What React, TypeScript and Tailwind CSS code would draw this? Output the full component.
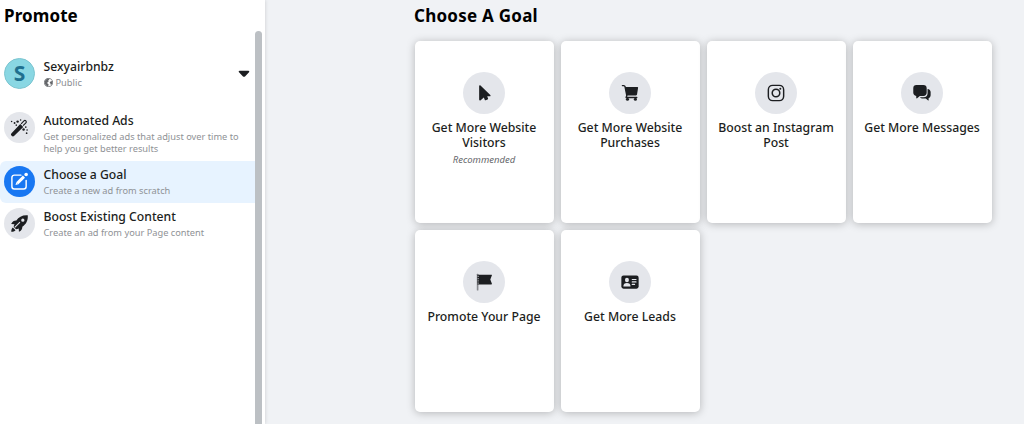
import React from "react";

type IconProps = { className?: string };

const WandIcon = ({ className }: IconProps) => (
  <svg viewBox="0 0 20 20" className={className} fill="currentColor">
    <path d="M1.600 16 10.800 6.400l3.200 3-9.500 9.400c-.9.800-1.900.8-2.700 0-1-.9-1.100-1.900-.2-2.800z" />
    <path
      d="M11.700 6.200 14.700 3.100c.6-.6 1.400-.6 2 0s.6 1.400 0 2l-2.900 3"
      fill="none"
      stroke="currentColor"
      strokeWidth="1.200"
    />
    <circle cx="1.700" cy="3.600" r="0.800" />
    <circle cx="4.800" cy="5.200" r="1" />
    <circle cx="8" cy="3.800" r="1.300" />
    <circle cx="6.600" cy="7.500" r="0.800" />
    <circle cx="11.200" cy="2" r="0.800" />
    <circle cx="16.600" cy="9.500" r="0.900" />
    <circle cx="14.300" cy="12" r="1.300" />
    <circle cx="18" cy="12.600" r="0.800" />
    <circle cx="17.500" cy="16" r="0.900" />
  </svg>
);

const ComposeIcon = ({ className }: IconProps) => (
  <svg viewBox="0 0 20 20" className={className} fill="none" stroke="currentColor">
    <path
      d="M11.500 3.300H4.600A2.600 2.600 0 0 0 2 5.900v9.400a2.600 2.600 0 0 0 2.600 2.600h9.800a2.600 2.600 0 0 0 2.600-2.600V8.800"
      strokeWidth="1.500"
      strokeLinecap="round"
    />
    <path d="M7.700 11.800 14.700 4.900" strokeWidth="3.200" />
    <path d="m5.800 13.800.8-3.100 2.300 2.200z" fill="currentColor" stroke="none" />
    <circle cx="17" cy="2.700" r="1.900" fill="currentColor" stroke="none" />
  </svg>
);

const RocketIcon = ({ className }: IconProps) => (
  <svg viewBox="0 0 20 20" className={className} fill="currentColor">
    <path
      fillRule="evenodd"
      d="M18.700 1.300C13 .9 9.200 3 6.700 6.900 4.300 6.800 2.500 8 1.200 10.500l3.500.2c-.6 1.200-.8 2.100-.8 2.900l2.500 2.500c.9 0 1.800-.3 2.800-.8l.2 3.500c2.500-1.300 3.700-3.100 3.600-5.500 4-2.600 6.100-6.300 5.700-12zM13.500 4.800a1.700 1.700 0 1 1 0 3.400 1.700 1.700 0 0 1 0-3.400z"
    />
    <path d="m5 14 5.500-5.500" stroke="#e4e6eb" strokeWidth="1.100" />
    <path d="M3 14.200c-1.200 1-1.700 2.500-1.700 4.500 2 0 3.500-.5 4.500-1.700z" />
  </svg>
);

const GlobeIcon = ({ className }: IconProps) => (
  <svg viewBox="0 0 16 16" className={className}>
    <circle cx="8" cy="8" r="7.200" fill="#fff" stroke="#65676b" strokeWidth="1.400" />
    <path
      d="M1.300 6.500C2 3.500 4.500 1 8 .9c1.200.4 1.700 1 1 2L7.500 4.600l.8 1.600-2 1.300-.6 2 2.500 1.600-.7 3.700C3.800 14.400.8 11.400 1.300 6.500zM11.500 6l3.400-.500c.5 3.300-.6 6-2.700 7.500l-.5-2.600-1.700-2z"
      fill="#65676b"
    />
  </svg>
);

const CursorIcon = ({ className }: IconProps) => (
  <svg viewBox="0 0 20 20" className={className} fill="currentColor">
    <path d="M4.600 2.300c0-.9.900-1.200 1.500-.6l10.900 10.500c.6.700.2 1.500-.6 1.500h-2.800l.9 2.400c.2.500 0 .9-.5 1.100l-2.100.9c-.5.200-.9 0-1.100-.5l-1-2.500-3.500 2.900c-.7.600-1.700.2-1.700-.7z" />
  </svg>
);

const CartIcon = ({ className }: IconProps) => (
  <svg viewBox="0 0 20 20" className={className} fill="currentColor">
    <path
      d="M1.600 1.800h1.500c.8 0 1.200.4 1.400 1.200l2 9.800-.8 2.200h11.800"
      fill="none"
      stroke="currentColor"
      strokeWidth="1.600"
      strokeLinecap="round"
      strokeLinejoin="round"
    />
    <path d="M4.600 3.400h13.700c.5 0 .8.400.7.900l-1.200 7.500c-.1.600-.5.900-1.100.9H6.300z" />
    <circle cx="7.200" cy="17" r="1.700" />
    <circle cx="16" cy="17" r="1.700" />
  </svg>
);

const InstagramIcon = ({ className }: IconProps) => (
  <svg viewBox="0 0 20 20" className={className} fill="none" stroke="currentColor">
    <rect x="1.500" y="1.500" width="17" height="17" rx="4.800" strokeWidth="1.600" />
    <circle cx="10" cy="10" r="4.200" strokeWidth="1.700" />
    <circle cx="14.800" cy="5.200" r="1.100" fill="currentColor" stroke="none" />
  </svg>
);

const MessagesIcon = ({ className }: IconProps) => (
  <svg viewBox="0 0 20 20" className={className} fill="currentColor">
    <path d="M16.200 5.500c2 .1 3.400 1.500 3.400 3.500v3.200c0 1.700-.8 3-2.300 3.500l.1 2c0 .6-.5.800-.9.400l-2.300-2h-3c-1.600 0-2.900-.5-3.600-1.500h4.200c2.700 0 4.400-1.700 4.400-4.400z" />
    <path d="M3.700 1.100h7.900c2.200 0 3.600 1.300 3.600 3.500v5.200c0 2.100-1.400 3.500-3.600 3.500H7.600l-3 2.500c-.5.400-1 .1-1-.5v-2.100C1.500 12.800.3 11.600.3 9.800V4.600c0-2.200 1.300-3.500 3.400-3.500z" />
  </svg>
);

const FlagIcon = ({ className }: IconProps) => (
  <svg viewBox="0 0 20 20" className={className} fill="currentColor">
    <rect x="2" y="0.800" width="1.800" height="18.600" rx="0.600" fill="#85878c" />
    <path d="M2.600 1.900h15.500c.7 0 .9.400.6.900L17 7.300l1.700 4.500c.3.600 0 1-.6 1H2.600z" />
    <path d="M3.500 3v9" stroke="#a4a6aa" strokeWidth="1.300" strokeDasharray="1.500 1" />
  </svg>
);

const LeadsIcon = ({ className }: IconProps) => (
  <svg viewBox="0 0 20 20" className={className}>
    <rect x="0.400" y="2.800" width="19.200" height="14.600" rx="2.400" fill="currentColor" />
    <g fill="#e4e6eb">
      <ellipse cx="6.600" cy="7.700" rx="2.200" ry="2.500" />
      <path d="M2.600 15c0-2.700 1.500-3.900 4-3.900s4 1.200 4 3.900z" />
      <rect x="11.900" y="6.600" width="5.400" height="1.300" rx="0.600" />
      <rect x="11.900" y="9.300" width="5.400" height="1.300" rx="0.600" />
      <rect x="11.900" y="12" width="3.800" height="1.300" rx="0.600" />
    </g>
  </svg>
);

const menu = [
  {
    title: "Automated Ads",
    text: "Get personalized ads that adjust over time to help you get better results",
    icon: WandIcon,
    active: false,
    height: "h-[54px]",
  },
  {
    title: "Choose a Goal",
    text: "Create a new ad from scratch",
    icon: ComposeIcon,
    active: true,
    height: "h-[42px]",
  },
  {
    title: "Boost Existing Content",
    text: "Create an ad from your Page content",
    icon: RocketIcon,
    active: false,
    height: "h-[42px]",
  },
];

const goals = [
  { title: "Get More Website Visitors", note: "Recommended", icon: CursorIcon },
  { title: "Get More Website Purchases", icon: CartIcon },
  { title: "Boost an Instagram Post", icon: InstagramIcon },
  { title: "Get More Messages", icon: MessagesIcon },
  { title: "Promote Your Page", icon: FlagIcon },
  { title: "Get More Leads", icon: LeadsIcon },
];

const Sidebar = () => {
  return (
    <aside className="flex h-full w-[265px] shrink-0 bg-white shadow-[0_0_4px_rgba(0,0,0,0.16)]">
      <div className="w-[255px] shrink-0">
        <h1 className="pl-1 pt-1 text-[17px] font-bold leading-6 tracking-[0.1px] text-black">
          Promote
        </h1>

        <div className="mt-[30px] flex h-[49px] pl-1">
          <div className="flex h-[31px] w-[31px] shrink-0 justify-center rounded-full border border-[#7cc5d0] bg-[#89d7e3] font-['Open_Sans',sans-serif] text-[21px] font-bold leading-[28px] text-[#20708f]">
            S
          </div>
          <div className="ml-[8.500px] grow">
            <p className="text-[12.200px] font-medium leading-[18px] text-[#1c1e21]">Sexyairbnbz</p>
            <p className="flex items-center gap-[3px] text-[9.300px] leading-[13px] text-[#8a8d91]">
              <GlobeIcon className="h-[9px] w-[9px]" />
              Public
            </p>
          </div>
          <svg viewBox="0 0 12 8" className="mr-[5px] mt-3 h-2 w-3 shrink-0" fill="#1c1e21">
            <path d="M1.600.8h8.800c.9 0 1.200.8.6 1.400L7 6.400c-.6.600-1.400.6-2 0L1 2.200C.4 1.600.7.800 1.600.8z" />
          </svg>
        </div>

        <nav>
          {menu.map((item) => (
            <a
              key={item.title}
              className={`flex rounded-l-md pl-1 pt-[5px] ${item.height} ${
                item.active ? "bg-[#e7f3ff]" : ""
              }`}
            >
              <span
                className={`flex h-[31px] w-[31px] shrink-0 items-center justify-center rounded-full ${
                  item.active ? "bg-[#1877f2] text-white" : "bg-[#e4e6eb] text-[#1c1e21]"
                }`}
              >
                <item.icon className="h-[19px] w-[19px]" />
              </span>
              <span className="ml-[8.500px] block">
                <span className="block pt-px text-[12.200px] font-medium leading-4 text-[#1c1e21]">
                  {item.title}
                </span>
                <span className="mt-[2px] block w-[206px] text-[9.250px] leading-3 text-[#8f9296]">
                  {item.text}
                </span>
              </span>
            </a>
          ))}
        </nav>
      </div>
      <div className="mt-[31px] w-[7px] rounded-t-full bg-[#bcc0c4]" />
    </aside>
  );
};

const GoalGrid = () => {
  return (
    <main className="pl-[149px]">
      <h2 className="pt-1 text-[17px] font-bold leading-6 tracking-[0.250px] text-black">
        Choose A Goal
      </h2>
      <div className="mt-[13px] grid grid-cols-[repeat(4,139px)] gap-[7px] pl-[0.500px]">
        {goals.map((goal) => (
          <div
            key={goal.title}
            className="flex h-[182px] flex-col items-center rounded-[5px] bg-white pt-[31px] text-center shadow-[0_1px_8px_rgba(0,0,0,0.25)]"
          >
            <div className="flex h-[42px] w-[42px] items-center justify-center rounded-full bg-[#e4e6eb] text-[#1c1e21]">
              <goal.icon className="h-[18px] w-[18px]" />
            </div>
            <h3 className="mt-1.5 w-[122px] text-[12.250px] font-medium leading-[15px] text-[#1c1e21]">
              {goal.title}
            </h3>
            {goal.note && (
              <p className="mt-[3px] text-[9.500px] italic leading-[13px] text-[#65676b]">{goal.note}</p>
            )}
          </div>
        ))}
      </div>
    </main>
  );
};

const App = () => {
  return (
    <div className="flex h-[424px] w-[1024px] overflow-hidden bg-[#f0f2f5] font-['Noto_Sans',sans-serif]">
      <Sidebar />
      <GoalGrid />
    </div>
  );
};

export default App;
